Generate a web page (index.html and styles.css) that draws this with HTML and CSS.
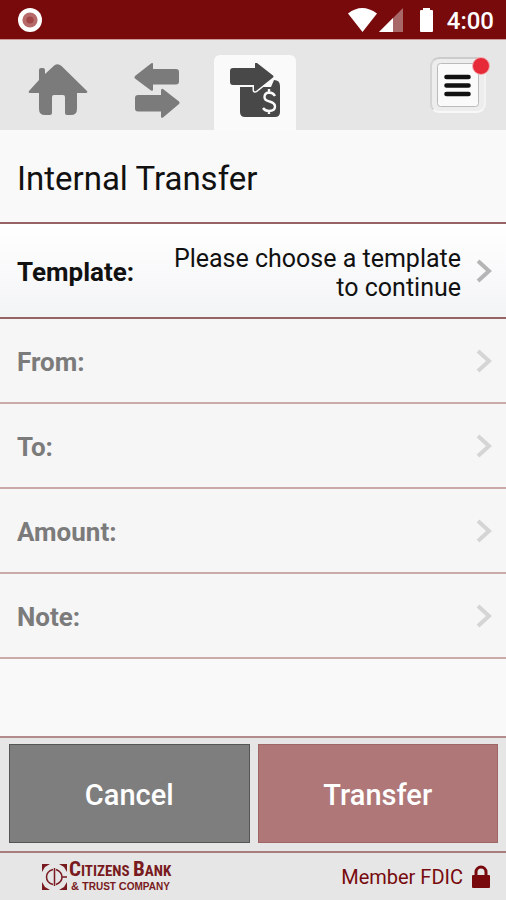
FILE: index.html
```html
<!DOCTYPE html>
<html lang="en">
<head>
<meta charset="utf-8">
<meta name="viewport" content="width=device-width, initial-scale=1">
<title>Internal Transfer</title>
<link rel="stylesheet" href="styles.css">
</head>
<body>
<div class="app">
  <div class="status">
    <svg class="record" width="26" height="26" viewBox="0 0 26 26" aria-hidden="true">
      <circle cx="13" cy="13" r="12" fill="#fff"/>
      <circle cx="13" cy="13" r="7.6" fill="#b66a6a"/>
      <circle cx="13" cy="13" r="3.6" fill="#a04545"/>
    </svg>
    <svg class="signals" width="88" height="26" viewBox="0 0 88 26" aria-hidden="true">
      <path d="M1 6.500Q15-4.500 30 6.500L15.500 25z" fill="#fff"/>
      <path d="M56 1V25H32z" fill="#a86868"/>
      <path d="M46 11V25H32z" fill="#fff"/>
      <path d="M76 1h7v2h2q1 0 1 1v20q0 1-1 1H74q-1 0-1-1V4q0-1 1-1h2z" fill="#fff"/>
    </svg>
    <span class="clock">4:00</span>
  </div>

  <nav class="tabs">
    <a class="tab home" href="#home" aria-label="Home">
      <svg width="60" height="54" viewBox="0 0 60 54"><path d="M11 17V7q0-2 2-2h2q2 0 2 2v4L26.500 2.200Q30-.2 33.500 3L59 28q1 2-1 2H49V46q0 6-6 6H39q-2 0-2-2V34q0-2-2-2H26q-2 0-2 2V50q0 2-2 2H17q-6 0-6-6V30H2q-2 0-1-2z" fill="#7b7b7b"/></svg>
    </a>
    <a class="tab" href="#transfers" aria-label="Transfers">
      <svg width="46" height="58" viewBox="0 0 46 58"><path d="M1 13L17 .5q2-1.500 2 1V6H42q3 0 3 3V18.500q0 3-3 3H19v5q0 2-2 1L1 15.500q-1-1 0-2.500zM45 41L29 54.500q-2 1-2-1V48.500H4q-3 0-3-3V35q0-3 3-3H27V28q0-3 2-2L45 38.500q1 1 0 2.500z" fill="#7b7b7b"/></svg>
    </a>
    <a class="tab active" href="#pay" aria-label="Internal transfer" aria-current="page">
      <svg width="52" height="56" viewBox="0 0 52 56">
        <path d="M11 24H42L45 17Q51 17 51 23V49q0 5-5 5H16q-5 0-5-5z" fill="#484848"/>
        <path d="M4 5H26V1q0-2 2-1L44 12.500q1 1 0 2L27 28q-2 1-2-1V22H4q-3 0-3-3V8q0-3 3-3z" fill="#484848" stroke="#fafafa" stroke-width="3" paint-order="stroke"/>
        <path d="M46 33Q44 29.500 40 29.500Q35.500 30 35.500 34Q35.500 37.500 40.500 38.500Q46 40 46 43.500Q46 48 40 48Q36 48 34 45M40 26V30M40 48V51" fill="none" stroke="#fafafa" stroke-width="2.400"/>
      </svg>
    </a>
    <button class="menu" type="button" aria-label="Menu">
      <svg width="42" height="44" viewBox="0 0 42 44">
        <rect x=".5" y=".5" width="41" height="43" rx="3" fill="#fafafa" stroke="#bbb"/>
        <path d="M9.500 14H31.500M9.500 22.500H31.500M9.500 31H31.500" stroke="#111" stroke-width="4.600" stroke-linecap="round"/>
      </svg>
      <span class="dot"></span>
    </button>
  </nav>

  <main class="content">
    <h1>Internal Transfer</h1>
    <button class="row ready" type="button">
      <span class="label">Template:</span>
      <span class="value">Please choose a template to continue</span>
      <svg class="chevron" width="16" height="24" viewBox="0 0 16 24" aria-hidden="true"><path d="M2 2L13 12L2 22"/></svg>
    </button>
    <button class="row" type="button" disabled>
      <span class="label">From:</span>
      <svg class="chevron" width="16" height="24" viewBox="0 0 16 24" aria-hidden="true"><path d="M2 2L13 12L2 22"/></svg>
    </button>
    <button class="row" type="button" disabled>
      <span class="label">To:</span>
      <svg class="chevron" width="16" height="24" viewBox="0 0 16 24" aria-hidden="true"><path d="M2 2L13 12L2 22"/></svg>
    </button>
    <button class="row" type="button" disabled>
      <span class="label">Amount:</span>
      <svg class="chevron" width="16" height="24" viewBox="0 0 16 24" aria-hidden="true"><path d="M2 2L13 12L2 22"/></svg>
    </button>
    <button class="row" type="button" disabled>
      <span class="label">Note:</span>
      <svg class="chevron" width="16" height="24" viewBox="0 0 16 24" aria-hidden="true"><path d="M2 2L13 12L2 22"/></svg>
    </button>
  </main>

  <div class="actions">
    <button class="action cancel" type="button">Cancel</button>
    <button class="action submit" type="button" disabled>Transfer</button>
  </div>

  <footer class="footer">
    <div class="brand">
      <svg width="25" height="26" viewBox="0 0 25 26" aria-hidden="true">
        <path d="M0 0H8L3 3L0 8zM17 0H25V8L22 3zM0 26V18L3 23L8 26zM17 26L22 23L25 18V26z" fill="#781a20"/>
        <path d="M11 5.500Q4.500 7.500 4.500 13Q4.500 18.500 11 20.500M14 5.500Q20 8 20 13Q20 18 14 20.500M12.500 4V22M20 13H25" fill="none" stroke="#781a20" stroke-width="1.500"/>
      </svg>
      <div class="name">
        <span class="line1"><span class="cap">C</span>ITIZENS <span class="cap">B</span>ANK</span>
        <span class="line2"><span class="cap">&amp; T</span>RUST <span class="cap">C</span>OMPANY</span>
      </div>
    </div>
    <div class="member">
      <span>Member FDIC</span>
      <svg width="18" height="23" viewBox="0 0 18 23" aria-hidden="true"><path d="M4 11V7a5 5 0 0 1 10 0v4" fill="none" stroke="#780a0e" stroke-width="3"/><rect y="10" width="18" height="13" rx="1" fill="#780a0e"/></svg>
    </div>
  </footer>
</div>
</body>
</html>
```

FILE: styles.css
```css
* { box-sizing: border-box; }
body { margin: 0; background: #f9f9f9; font-family: Roboto, "Liberation Sans", sans-serif; color: #111; }
button { font: inherit; color: inherit; border: 0; margin: 0; padding: 0; border-radius: 0; }
svg { display: block; flex: none; }

.app { display: flex; flex-direction: column; min-height: 100vh; }

.status { display: flex; align-items: center; height: 40px; padding: 0 12px 0 17px; background: #780a0c; border-bottom: 1px solid #c99; }
.signals { margin-left: auto; }
.clock { margin-left: 12px; padding-top: 2px; font-size: 24px; line-height: 28px; font-weight: 500; color: #fff; }

.tabs { display: flex; align-items: flex-end; height: 90px; padding: 0 20px 0 16px; background: #e6e6e6; }
.tab { display: flex; justify-content: center; align-items: flex-start; width: 82px; height: 75px; padding-top: 8px; margin-right: 16px; }
.home { width: 84px; }
.active { margin-right: 0; background: #fafafa; border-radius: 6px 6px 0 0; }
.menu { position: relative; align-self: center; display: flex; justify-content: center; align-items: center; width: 56px; height: 56px; margin-left: auto; border-radius: 9px; background: #ededed; border: 2px solid; border-color: #ccc #f4f4f4 #f8f8f8 #d4d4d4; }
.dot { position: absolute; top: -2px; right: -6px; width: 18px; height: 18px; border-radius: 50%; background: #e62a38; border: 1px solid #f3b4b8; }

.content { flex: 1; background: #f9f9f9; }
h1 { margin: 0; padding: 30px 17px 24px; font-size: 33px; line-height: 38px; font-weight: 400; border-bottom: 2px solid #966464; }
.row { display: flex; align-items: center; width: 100%; min-height: 85px; padding: 0 14px 0 17px; background: #f6f6f6; border-bottom: 2px solid #cbaaaa; font-size: 26px; line-height: 29px; text-align: left; color: #7b7b7b; }
.ready { min-height: 95px; background: linear-gradient(#fff, #f3f4f6); border-bottom-color: #966464; color: #111; }
.label { flex: none; padding-top: 4px; font-weight: 700; }
.value { flex: 1; margin: 0 15px 0 24px; padding-top: 4px; font-size: 25px; text-align: right; }
.chevron { margin-left: auto; fill: none; stroke: #d5d5d5; stroke-width: 4; }
.ready .chevron { stroke: #b5b5b5; }

.actions { display: grid; grid-template-columns: 1fr 1fr; gap: 8px; padding: 6px 8px 8px 9px; background: #e6e6e6; border-top: 2px solid #b38d8d; }
.action { height: 99px; padding-top: 2px; font-size: 29px; line-height: 34px; font-weight: 500; color: #fff; }
.cancel { background: #7e7e7e; border: 1px solid #555; }
.submit { background: #af7777; border: 1px solid #a06666; }

.footer { display: flex; justify-content: space-between; align-items: center; height: 49px; padding: 0 16px 0 42px; background: #e6e6e6; border-top: 2px solid #a77d7d; color: #780a0e; }
.brand { display: flex; align-items: center; gap: 2px; }
.name { display: flex; flex-direction: column; font-family: "Roboto Condensed", "Open Sans Condensed", "Liberation Serif", serif; font-weight: 700; color: #781a20; white-space: nowrap; }
.line1 { font-size: 15px; line-height: 17px; }
.line1 .cap { font-size: 21px; }
.line2 { font-family: "Liberation Sans", sans-serif; font-size: 10px; line-height: 12px; padding-left: 2px; }
.line2 .cap { font-size: 11px; }
.member { display: flex; align-items: center; gap: 9px; font-size: 20px; line-height: 24px; }
```
